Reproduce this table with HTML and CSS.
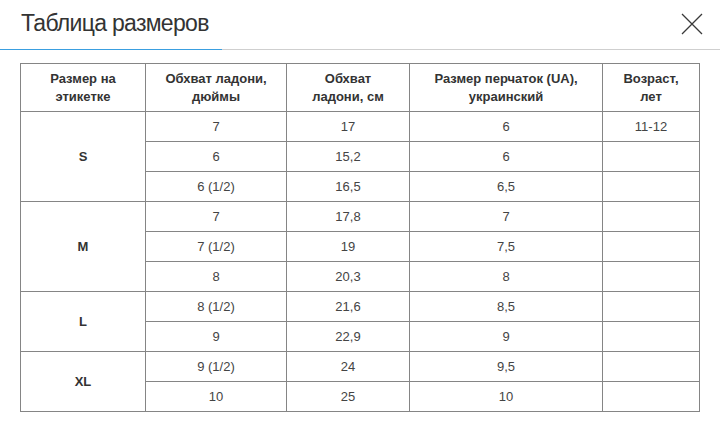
FILE: index.html
```
<!DOCTYPE html>
<html lang="ru">
<head>
<meta charset="utf-8">
<link rel="stylesheet" href="styles.css">
</head>
<body>
<div class="modal">
  <div class="modal-head">
    <div class="title">Таблица размеров</div>
    <div class="head-rest">
      <button class="close" aria-label="Закрыть">
        <svg width="22" height="22" viewBox="0 0 22 22"><path d="M1 1 L21 21 M21 1 L1 21" stroke="#3a3a3a" stroke-width="1.3" fill="none"/></svg>
      </button>
    </div>
  </div>
  <div class="modal-body">
    <table class="sizes">
      <colgroup>
        <col class="c1"><col class="c2"><col class="c3"><col class="c4"><col class="c5">
      </colgroup>
      <thead>
        <tr>
          <th>Размер на<br>этикетке</th>
          <th>Обхват ладони,<br>дюймы</th>
          <th>Обхват<br>ладони, см</th>
          <th>Размер перчаток (UA),<br>украинский</th>
          <th>Возраст,<br>лет</th>
        </tr>
      </thead>
      <tbody>
        <tr><td rowspan="3" class="sz">S</td><td>7</td><td>17</td><td>6</td><td>11-12</td></tr>
        <tr><td>6</td><td>15,2</td><td>6</td><td></td></tr>
        <tr><td>6 (1/2)</td><td>16,5</td><td>6,5</td><td></td></tr>
        <tr><td rowspan="3" class="sz">M</td><td>7</td><td>17,8</td><td>7</td><td></td></tr>
        <tr><td>7 (1/2)</td><td>19</td><td>7,5</td><td></td></tr>
        <tr><td>8</td><td>20,3</td><td>8</td><td></td></tr>
        <tr><td rowspan="2" class="sz">L</td><td>8 (1/2)</td><td>21,6</td><td>8,5</td><td></td></tr>
        <tr><td>9</td><td>22,9</td><td>9</td><td></td></tr>
        <tr><td rowspan="2" class="sz">XL</td><td>9 (1/2)</td><td>24</td><td>9,5</td><td></td></tr>
        <tr><td>10</td><td>25</td><td>10</td><td></td></tr>
      </tbody>
    </table>
  </div>
</div>
</body>
</html>
```
FILE: styles.css
```
html, body {
  margin: 0;
  padding: 0;
  background: #fff;
}
body {
  font-family: "Liberation Sans", Arial, sans-serif;
  color: #333;
}
.modal {
  width: 720px;
}
.modal-head {
  display: flex;
  height: 50px;
}
.title {
  font-size: 23px;
  letter-spacing: -0.7px;
  line-height: 46px;
  height: 49px;
  width: 201px;
  padding-left: 21px;
  border-bottom: 1px solid #3a9fe0;
  color: #333;
  white-space: nowrap;
}
.head-rest {
  flex: 1;
  height: 49px;
  border-bottom: 1px solid #cfcfcf;
  display: flex;
  align-items: center;
  justify-content: flex-end;
}
.close {
  border: 0;
  background: none;
  padding: 0;
  margin-right: 17px;
  margin-top: -2px;
  width: 22px;
  height: 22px;
  display: flex;
}
.modal-body {
  padding: 13px 21px 0 20px;
}
.sizes {
  border-collapse: collapse;
  width: 679px;
  table-layout: fixed;
  font-size: 13px;
  color: #444;
}
.c1 { width: 125px; }
.c2 { width: 141px; }
.c3 { width: 123px; }
.c4 { width: 193px; }
.c5 { width: 97px; }
.sizes th, .sizes td {
  border: 1px solid #858585;
  text-align: center;
  vertical-align: middle;
  padding: 0;
}
.sizes th {
  font-weight: bold;
  color: #333;
  height: 47px;
  line-height: 18px;
}
.sizes td {
  height: 29px;
  line-height: 16px;
}
.sizes td.sz {
  font-weight: bold;
  color: #333;
}
```
